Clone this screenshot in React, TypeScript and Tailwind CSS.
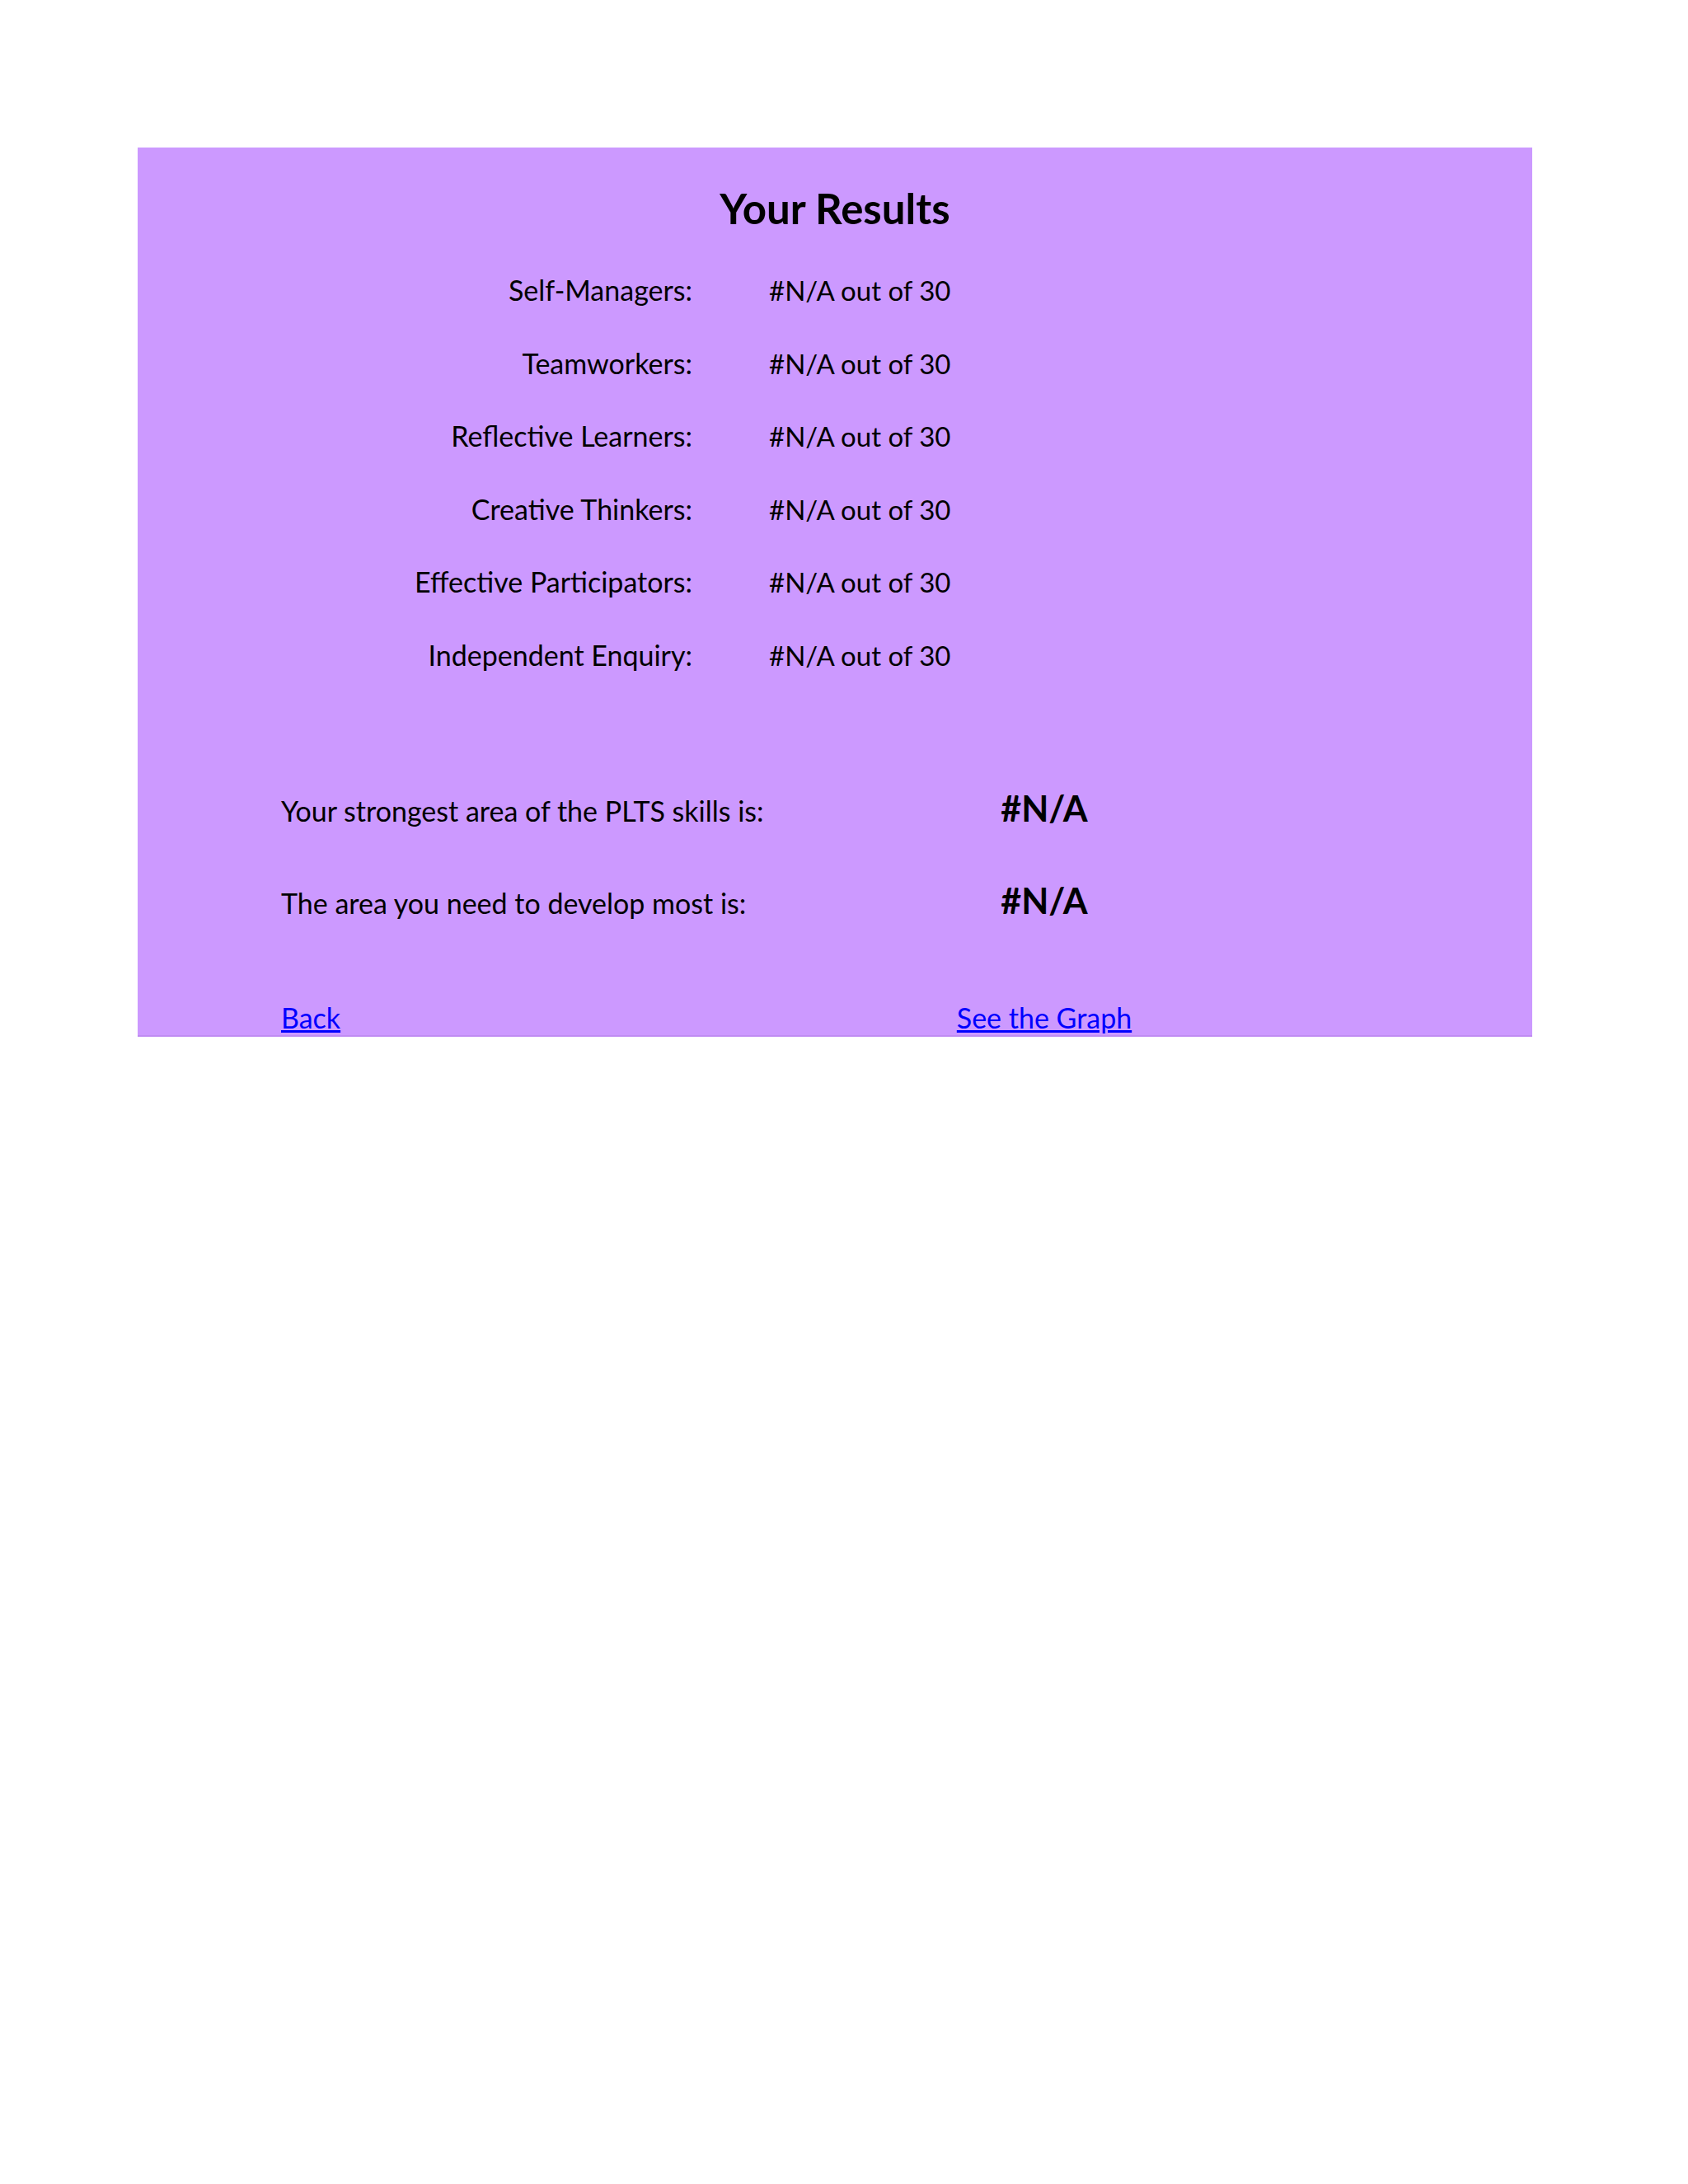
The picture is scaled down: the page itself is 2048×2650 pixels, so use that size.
const skills = [
  'Self-Managers:',
  'Teamworkers:',
  'Reflective Learners:',
  'Creative Thinkers:',
  'Effective Participators:',
  'Independent Enquiry:',
]

export default function App() {
  return (
    <div className="min-h-[2650px] bg-white pl-[167px] pt-[179px] text-black" style={{ fontFamily: 'Lato, "Noto Sans", sans-serif' }}>
      <div className="h-[1079px] w-[1692px] border-b-2 border-[#c08cf3] bg-[#cc99ff]">
        <h1 className="pt-[50px] text-center text-[51px] leading-[48px] font-bold">Your Results</h1>

        <div className="mt-[31px]">
          {skills.map((s) => (
            <div key={s} className="flex h-[88.6px] items-center leading-[88.6px]">
              <div className="w-[673px] text-right text-[34px]">{s}</div>
              <div className="pl-[93px] text-[33px]">#N/A out of 30</div>
            </div>
          ))}
        </div>

        <div className="mt-[109px] pl-[174px]">
          <div className="flex h-[60px] items-baseline">
            <div className="w-[820px] text-[34px]">Your strongest area of the PLTS skills is:</div>
            <div className="w-[212px] text-center text-[43px] font-bold">#N/A</div>
          </div>
          <div className="mt-[52px] flex h-[60px] items-baseline">
            <div className="w-[820px] text-[34px]">The area you need to develop most is:</div>
            <div className="w-[212px] text-center text-[43px] font-bold">#N/A</div>
          </div>
          <div className="mt-[88px] flex items-baseline whitespace-nowrap text-[34px] text-[#0000ff]">
            <div className="w-[820px]">
              <a href="#" className="underline">Back</a>
            </div>
            <div className="flex w-[212px] justify-center">
              <a href="#" className="underline">See the Graph</a>
            </div>
          </div>
        </div>
      </div>
    </div>
  )
}
